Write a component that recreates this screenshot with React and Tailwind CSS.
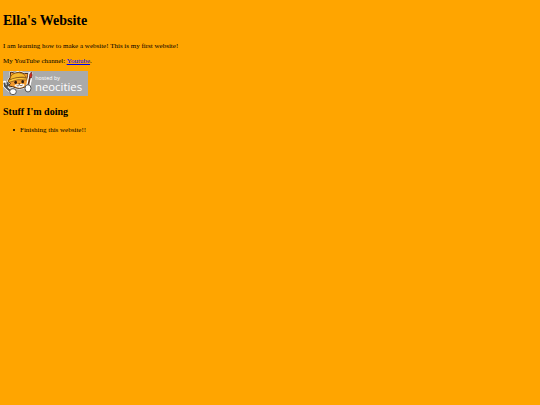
function NeocitiesBadge() {
  return (
    <svg viewBox="0 0 255 75" className="block h-[25px] w-[85px]" role="img" aria-label="Hosted by Neocities">
      <rect width="255" height="75" fill="#aaaaaa" />
      {/* cat's head */}
      <path
        d="M21 20 L23 3 L36 7 Q50 -1 64 8 L75 7 L74 21 L82 30 L76 36 L81 42 L70 46 Q50 58 29 47 L17 45 L22 37 L15 31 Z"
        fill="#f29a2e"
        stroke="#fff"
        strokeWidth="6"
        strokeLinejoin="round"
      />
      <path
        d="M21 20 L23 3 L36 7 Q50 -1 64 8 L75 7 L74 21 L82 30 L76 36 L81 42 L70 46 Q50 58 29 47 L17 45 L22 37 L15 31 Z"
        fill="#f29a2e"
        stroke="#4a2a12"
        strokeWidth="3"
        strokeLinejoin="round"
      />
      <path d="M21 24 Q24 5 47 5 Q65 7 70 20 Q51 14 21 28 Z" fill="#f5b82e" stroke="#7a4a12" strokeWidth="2" />
      <path d="M15 29 Q42 14 72 22 L71 27 Q43 22 19 34 Z" fill="#ffc93a" stroke="#7a4a12" strokeWidth="2" />
      <path d="M34 43 Q40 38 48 40 Q58 36 65 41 Q64 48 50 50 Q38 50 34 43 Z" fill="#fff" />
      <ellipse cx="38" cy="34" rx="4" ry="5" fill="#2d1a10" />
      <ellipse cx="59" cy="32" rx="4" ry="5" fill="#2d1a10" />
      <path d="M45 38 L52 37 L49 41 Z" fill="#2d1a10" />
      <path d="M41 44 Q46 47 49 42 Q54 47 59 42" fill="none" stroke="#4a2a12" strokeWidth="2" />
      {/* wrench and left paw */}
      <path d="M5 35 L6 45 L15 54 L25 62" fill="none" stroke="#fff" strokeWidth="11" strokeLinecap="round" />
      <path d="M4 35 L6 45 L15 54 L25 62 M13 34 L15 43 L9 47" fill="none" stroke="#4d4d4d" strokeWidth="6" />
      <ellipse cx="30" cy="62" rx="10" ry="9" fill="#fff" stroke="#555" strokeWidth="3" />
      {/* brush and right paw */}
      <path d="M83 9 L76 44" stroke="#fff" strokeWidth="13" strokeLinecap="round" />
      <path d="M81 18 L75 46" stroke="#5b3020" strokeWidth="5" />
      <path d="M79 18 Q79 8 85 3 Q90 12 85 21 Z" fill="#d52a20" stroke="#5b2018" strokeWidth="2" />
      <ellipse cx="75" cy="52" rx="9" ry="11" fill="#fff" stroke="#555" strokeWidth="3" />
      <text x="97" y="27" fontSize="16" fill="#fff" className="font-['Open_Sans',sans-serif]">hosted by</text>
      <text x="96" y="61" fontSize="34" fill="#fff" className="font-['Open_Sans',sans-serif]">neocities</text>
    </svg>
  );
}

export default function App() {
  return (
    <main className="min-h-screen bg-[#ffa500] px-[3px] pt-3 font-['Liberation_Serif',serif] text-[7px] leading-[8px] text-black">
      <h1 className="text-[14px] leading-[18px] font-bold">Ella's Website</h1>
      <p className="mt-3">I am learning how to make a website! This is my first website!</p>
      <p className="mt-[7px]">
        My YouTube channel: <a href="#youtube" className="text-[#0000ee] underline">Youtube</a>.
      </p>
      <a href="#neocities" className="mt-[6px] block w-fit">
        <NeocitiesBadge />
      </a>
      <h2 className="mt-[10px] text-[10px] leading-[12px] font-bold">Stuff I'm doing</h2>
      <ul className="mt-2 pl-[10px]">
        <li className="flex items-center gap-[5px] before:size-[2px] before:rounded-full before:bg-black">
          Finishing this website!!
        </li>
      </ul>
    </main>
  );
}
